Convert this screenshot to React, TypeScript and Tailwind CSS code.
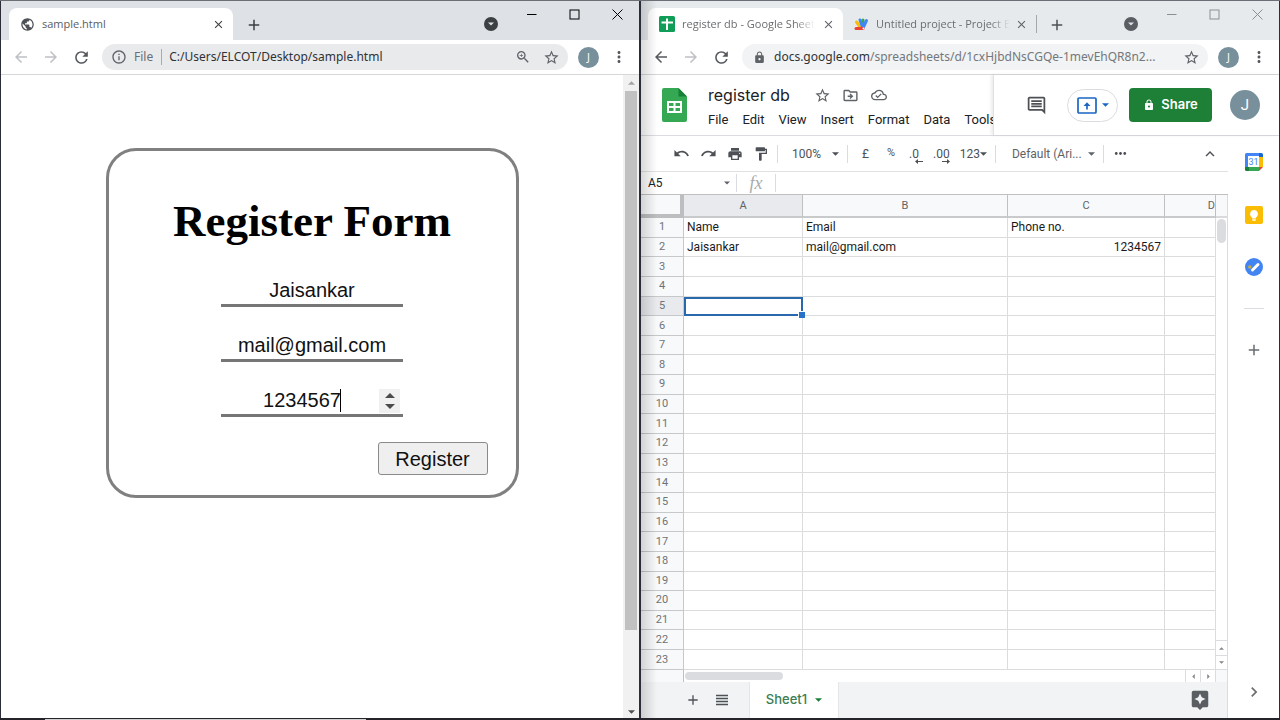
import React, { useState } from "react";
import {
  MdAdd,
  MdArrowBack,
  MdArrowForward,
  MdAssistant,
  MdChevronRight,
  MdClose,
  MdFormatPaint,
  MdInfoOutline,
  MdKeyboardArrowUp,
  MdLock,
  MdMoreHoriz,
  MdMoreVert,
  MdOutlineCloudDone,
  MdOutlineDriveFileMove,
  MdOutlineInsertComment,
  MdPrint,
  MdPublic,
  MdRedo,
  MdRefresh,
  MdStarBorder,
  MdUndo,
  MdViewHeadline,
  MdZoomIn,
} from "react-icons/md";

const CHROME_FONT = "font-['Open_Sans','Noto_Sans',sans-serif]";
const URL_FONT = "font-['Noto_Sans','Open_Sans',sans-serif]";

function SheetsFavicon() {
  return (
    <svg viewBox="0 0 16 16" className="size-4 shrink-0" aria-hidden="true">
      <rect width="16" height="16" rx="1.5" fill="#0f9d58" />
      <path d="M7 2.500h2v3h5v2H9v6.500H7v-6.500H2.500v-2H7z" fill="#fff" />
    </svg>
  );
}

function ScriptFavicon() {
  return (
    <svg viewBox="0 0 16 16" className="size-4 shrink-0" aria-hidden="true">
      <g strokeLinecap="round" strokeWidth="3">
        <path d="M3.500 6l4 5.500" stroke="#fbbc04" />
        <path d="M10 4l0 6" stroke="#34a853" />
        <path d="M7 4l2.500 7" stroke="#4285f4" />
        <path d="M13.500 4.500l-3.500 7.500" stroke="#4285f4" />
        <path d="M3 12.500h7" stroke="#ea4335" />
      </g>
      <circle cx="10.500" cy="12.500" r="1" fill="#fff" />
    </svg>
  );
}

function SheetsLogo() {
  return (
    <svg viewBox="0 0 25 34" className="h-[34px] w-[25px] shrink-0" aria-hidden="true">
      <path d="M2 0h14.500L25 8.500V32a2 2 0 0 1-2 2H2a2 2 0 0 1-2-2V2a2 2 0 0 1 2-2z" fill="#34a853" />
      <path d="M16.500 0L25 8.500h-8.500z" fill="#188038" />
      <path
        d="M5 13h15v12H5zM7 15v3h4.500v-3zM13.500 15v3H18v-3zM7 20v3h4.500v-3zM13.500 20v3H18v-3z"
        fill="#fff"
        fillRule="evenodd"
      />
    </svg>
  );
}

function CalendarIcon() {
  return (
    <svg viewBox="0 0 18 18" className="size-[18px]" aria-hidden="true">
      <path d="M1.500 0H14v3H3v11H0V1.500A1.500 1.500 0 0 1 1.500 0z" fill="#4285f4" />
      <path d="M14 0h2.500A1.500 1.500 0 0 1 18 1.500V4h-4z" fill="#1967d2" />
      <path d="M14 4h4v10h-4z" fill="#fbbc04" />
      <path d="M3 14h11v4H3z" fill="#34a853" />
      <path d="M0 14h4v4H1.500A1.500 1.500 0 0 1 0 16.500z" fill="#188038" />
      <path d="M14 14h4l-4 4z" fill="#ea4335" />
      <rect x="3" y="3" width="11" height="11" fill="#fff" />
      <text x="8.500" y="12" textAnchor="middle" fontSize="9" fill="#4285f4" fontFamily="Roboto, sans-serif">
        31
      </text>
    </svg>
  );
}

function KeepIcon() {
  return (
    <svg viewBox="0 0 18 18" className="size-[18px]" aria-hidden="true">
      <rect width="18" height="18" rx="2" fill="#fbbc04" />
      <path d="M9 4a4 4 0 0 0-2 7.400V12.500h4v-1.100A4 4 0 0 0 9 4zM7.300 13.300h3.400v1.500H7.300z" fill="#fff" />
    </svg>
  );
}

function TasksIcon() {
  return (
    <svg viewBox="0 0 18 18" className="size-[18px]" aria-hidden="true">
      <circle cx="9" cy="9" r="9" fill="#4384f3" />
      <circle cx="4.800" cy="9" r="1.800" fill="#c5a94f" />
      <path d="M7.500 12l5.500-5.500" stroke="#fff" strokeWidth="3" strokeLinecap="round" />
    </svg>
  );
}

function Triangle({ className }: { className: string }) {
  return (
    <svg viewBox="0 0 8 4" className={className} aria-hidden="true">
      <path d="M0 0h8L4 4z" fill="currentColor" />
    </svg>
  );
}

function WindowControls({ color, badge }: { color: string; badge: string }) {
  return (
    <div className="ml-auto flex shrink-0 items-start">
      <button aria-label="Search tabs" className={`mt-4 mr-3 flex size-[14px] items-center justify-center rounded-full text-[#dee1e6] ${badge}`}>
        <Triangle className="h-1 w-[6px]" />
      </button>
      <div className={`flex ${color}`}>
        <button aria-label="Minimize" className="flex h-[26px] w-[43px] items-center justify-center">
          <svg viewBox="0 0 11 11" className="size-[11px]">
            <path d="M1 5.500h9.500" stroke="currentColor" />
          </svg>
        </button>
        <button aria-label="Maximize" className="flex h-[26px] w-[43px] items-center justify-center">
          <svg viewBox="0 0 11 11" className="size-[11px]">
            <rect x="1" y="1" width="9" height="9" fill="none" stroke="currentColor" />
          </svg>
        </button>
        <button aria-label="Close window" className="flex h-[26px] w-[43px] items-center justify-center">
          <svg viewBox="0 0 11 11" className="size-[11px]">
            <path d="M.5.5l10 10M10.500.5l-10 10" stroke="currentColor" />
          </svg>
        </button>
      </div>
    </div>
  );
}

function NavButtons({ backClass }: { backClass: string }) {
  return (
    <>
      <button aria-label="Back" className={`flex w-[30px] justify-center ${backClass}`}>
        <MdArrowBack size={18} />
      </button>
      <button aria-label="Forward" className="flex w-[30px] justify-center text-[#bdc0c4]">
        <MdArrowForward size={18} />
      </button>
      <button aria-label="Reload" className="flex w-[30px] justify-center text-[#55595e]">
        <MdRefresh size={19} />
      </button>
    </>
  );
}

function ProfileAndMenu() {
  return (
    <>
      <button aria-label="Profile" className="ml-[10px] flex size-[21px] shrink-0 items-center justify-center rounded-full bg-[#78909c] text-[11px] text-white">
        J
      </button>
      <button aria-label="Browser menu" className="ml-[11px] shrink-0 text-[#55595e]">
        <MdMoreVert size={18} />
      </button>
    </>
  );
}

function ScrollArrow({ className }: { className: string }) {
  return <Triangle className={`h-1 w-[7px] ${className}`} />;
}

function FormWindow() {
  const [name, setName] = useState("Jaisankar");
  const [email, setEmail] = useState("mail@gmail.com");
  const [phone, setPhone] = useState("1234567");
  const field =
    "h-[31px] w-full border-b-[3px] border-[#767676] bg-transparent text-center text-[20px] leading-6 text-[#111] outline-none";

  return (
    <section className="flex min-w-0 flex-col border-x border-[#2b2d38] bg-white">
      <header className={`shrink-0 text-[12px] ${CHROME_FONT}`}>
        <div className="flex h-[39px] bg-[#dee1e6] pl-2">
          <div className="mt-[7px] flex w-[224px] items-center rounded-t-lg bg-white pr-2 pl-[11px] text-[11px] text-[#5a5d61]">
            <MdPublic size={15} className="text-[#4d5156]" />
            <span className="ml-[7px]">sample.html</span>
            <button aria-label="Close tab" className="ml-auto text-[#3c4043]">
              <MdClose size={13} />
            </button>
          </div>
          <button aria-label="New tab" className="mt-2 ml-3 flex items-center text-[#3c4043]">
            <MdAdd size={18} />
          </button>
          <WindowControls color="text-black" badge="bg-[#3c4043]" />
        </div>
        <div className="flex h-[35px] items-center border-b border-[#d5d7da] pr-[11px] pl-[5px]">
          <NavButtons backClass="text-[#bdc0c4]" />
          <div className={`ml-[6px] flex h-[26px] flex-1 items-center rounded-full bg-[#e9eaec] pr-2 pl-[9px] ${URL_FONT}`}>
            <MdInfoOutline size={16} className="text-[#5f6368]" />
            <span className="ml-[7px] border-r border-[#a8abaf] pr-2 leading-4 text-[#6b6e72]">File</span>
            <span className="ml-[7px] flex-1 truncate text-[#303236]">C:/Users/ELCOT/Desktop/sample.html</span>
            <button aria-label="Zoom" className="text-[#5f6368]">
              <MdZoomIn size={16} />
            </button>
            <button aria-label="Bookmark" className="ml-3 text-[#5f6368]">
              <MdStarBorder size={17} />
            </button>
          </div>
          <ProfileAndMenu />
        </div>
      </header>
      <div className="flex min-h-0 flex-1">
        <main className="flex flex-1 items-start justify-center pt-[73px]">
          <form
            onSubmit={(e) => e.preventDefault()}
            className="flex h-[350px] w-[413px] flex-col items-center rounded-[30px] border-[3px] border-[#808080] font-['Liberation_Sans',Arial,sans-serif]"
          >
            <h1 className="mt-11 font-['Liberation_Serif','Times_New_Roman',serif] text-[45px] leading-[52px] font-bold text-black">
              Register Form
            </h1>
            <div className="mt-[29px] flex w-[182px] flex-col gap-6">
              <input aria-label="Name" className={field} value={name} onChange={(e) => setName(e.target.value)} />
              <input aria-label="Email" className={field} value={email} onChange={(e) => setEmail(e.target.value)} />
              <div className="relative">
                <input
                  aria-label="Phone number"
                  type="number"
                  className={`${field} pr-5 [&::-webkit-inner-spin-button]:appearance-none`}
                  value={phone}
                  onChange={(e) => setPhone(e.target.value)}
                />
                <span className="absolute top-[3px] left-[119px] h-[23px] w-px bg-black" aria-hidden="true" />
                <div className="absolute top-[3px] right-[3px] flex h-6 w-[21px] flex-col items-center justify-center gap-[6px] bg-[#f0f0f0] text-[#4a4a4a]">
                  <button type="button" aria-label="Increase" onClick={() => setPhone(String(Number(phone) + 1))}>
                    <Triangle className="h-[5px] w-[10px] rotate-180" />
                  </button>
                  <button type="button" aria-label="Decrease" onClick={() => setPhone(String(Number(phone) - 1))}>
                    <Triangle className="h-[5px] w-[10px]" />
                  </button>
                </div>
              </div>
            </div>
            <button
              type="submit"
              className="mt-[25px] mr-7 h-[33px] w-[110px] self-end rounded-[3px] border border-[#8a8a8a] bg-[#efefef] text-[20px] leading-6 text-[#111]"
            >
              Register
            </button>
          </form>
        </main>
        <div className="flex w-4 flex-col items-center bg-[#f1f1f1] pt-[6px] pb-1">
          <ScrollArrow className="rotate-180 text-[#a3a3a3]" />
          <div className="mt-[6px] min-h-0 w-3 basis-[539px] bg-[#c1c1c1]" />
          <ScrollArrow className="mt-auto text-[#505050]" />
        </div>
      </div>
    </section>
  );
}

type Row = { name?: string; email?: string; phone?: string };
const rows: Row[] = [
  { name: "Name", email: "Email", phone: "Phone no." },
  { name: "Jaisankar", email: "mail@gmail.com", phone: "1234567" },
  ...Array.from({ length: 21 }, () => ({})),
];
const SELECTED_ROW = 5;

function Grid() {
  const head = "border-r border-b-[2px] border-r-[#c0c0c0] border-b-[#c8cacc] p-0 font-normal";
  const cell = "truncate border-r border-b border-[#dadcdd] p-0 px-[3px]";
  return (
    <table className="h-full w-full table-fixed border-separate border-spacing-0 text-[12px] leading-4 text-[#1a1a1a]">
      <colgroup>
        <col className="w-[43px]" />
        <col className="w-[119px]" />
        <col className="w-[205px]" />
        <col className="w-[157px]" />
        <col />
      </colgroup>
      <thead className="text-[11px] text-[#5f6368]">
        <tr className="h-[23px]">
          <th aria-label="Select all" className="border-r-4 border-b-4 border-[#bcbec0] bg-[#f8f9fa] p-0" />
          <th className={`${head} bg-[#e8eaed]`}>A</th>
          <th className={`${head} bg-[#f8f9fa]`}>B</th>
          <th className={`${head} bg-[#f8f9fa]`}>C</th>
          <th className={`${head} bg-[#f8f9fa] text-right`}>D</th>
        </tr>
      </thead>
      <tbody>
        {rows.map((row, i) => {
          const n = i + 1;
          const selected = n === SELECTED_ROW;
          return (
            <tr key={n}>
              <th
                scope="row"
                className={`border-r border-b border-[#c6c8ca] p-0 text-[11px] leading-4 font-normal text-[#6f7377] ${
                  selected ? "bg-[#e8eaed]" : "bg-[#f8f9fa]"
                }`}
              >
                {n}
              </th>
              {selected ? (
                <td className="relative border-2 border-[#2a68ae] p-0">
                  <span className="absolute -right-1 -bottom-1 size-[7px] border-t border-l border-white bg-[#2a72c8]" />
                </td>
              ) : (
                <td className={cell}>{row.name}</td>
              )}
              <td className={cell}>{row.email}</td>
              <td className={`${cell} ${n === 2 ? "text-right" : ""}`}>{row.phone}</td>
              <td className={cell} />
            </tr>
          );
        })}
      </tbody>
    </table>
  );
}

function Divider() {
  return <span className="h-[18px] w-px bg-[#dadce0]" />;
}

function SheetsToolbar() {
  return (
    <div className="flex h-9 shrink-0 items-center border-b border-[#dfe1e3] pr-[9px] pl-[32px] text-[12px] text-[#4d5156]">
      <div className="flex items-center gap-[10px]">
        <button aria-label="Undo"><MdUndo size={17} /></button>
        <button aria-label="Redo"><MdRedo size={17} /></button>
        <button aria-label="Print"><MdPrint size={16} /></button>
        <button aria-label="Paint format"><MdFormatPaint size={16} /></button>
      </div>
      <span className="w-2" />
      <Divider />
      <button className="ml-[14px] flex items-center gap-[11px]">
        100% <Triangle className="h-1 w-[7px]" />
      </button>
      <span className="w-2" />
      <Divider />
      <button className="ml-[14px]" aria-label="Format as currency">£</button>
      <button className="ml-[18px] text-[11px]" aria-label="Format as percent">%</button>
      <button className="relative ml-[14px]" aria-label="Decrease decimal places">
        .0
        <svg viewBox="0 0 8 5" className="absolute -right-1 -bottom-px h-[5px] w-2">
          <path d="M0 2.500L3 0v2h5v1H3v2z" fill="currentColor" />
        </svg>
      </button>
      <button className="relative ml-[14px]" aria-label="Increase decimal places">
        .00
        <svg viewBox="0 0 8 5" className="absolute right-0 -bottom-px h-[5px] w-2">
          <path d="M8 2.500L5 0v2H0v1h5v2z" fill="currentColor" />
        </svg>
      </button>
      <button className="ml-[10px] flex items-center">
        123 <Triangle className="h-1 w-[7px]" />
      </button>
      <span className="w-2" />
      <Divider />
      <button className="ml-[16px] flex items-center gap-[6px] text-[#5f6368]">
        Default (Ari... <Triangle className="h-1 w-[7px]" />
      </button>
      <span className="w-2" />
      <Divider />
      <button className="ml-2" aria-label="More"><MdMoreHoriz size={17} /></button>
      <button className="ml-auto" aria-label="Hide menus"><MdKeyboardArrowUp size={18} /></button>
    </div>
  );
}

const menus = ["File", "Edit", "View", "Insert", "Format", "Data", "Tools"];

function SheetsWindow() {
  return (
    <section className="relative flex min-w-0 flex-col border-x border-[#2b2d38] bg-white">
      <div className="pointer-events-none absolute inset-y-0 left-0 z-10 w-4 bg-linear-to-r from-black/15 to-transparent" />
      <header className={`shrink-0 text-[12px] ${CHROME_FONT}`}>
        <div className="flex h-[39px] bg-[#e7eaed] pl-[7px]">
          <div className="mt-[7px] flex w-[195px] shrink-0 items-center rounded-t-lg bg-white pr-2 pl-[11px] text-[11px] text-[#6a6d71]">
            <SheetsFavicon />
            <span className="ml-[7px] mask-r-from-85% whitespace-nowrap">register db - Google Sheet</span>
            <button aria-label="Close tab" className="ml-auto text-[#5f6368]">
              <MdClose size={13} />
            </button>
          </div>
          <div className="mt-[7px] flex w-[193px] shrink-0 items-center pr-[8px] pl-[10px] text-[11px] text-[#6a6d71]">
            <ScriptFavicon />
            <span className="ml-[7px] mask-r-from-85% whitespace-nowrap">Untitled project - Project E</span>
            <button aria-label="Close tab" className="ml-auto text-[#5f6368]">
              <MdClose size={13} />
            </button>
          </div>
          <span className="mt-[14px] h-[18px] w-px bg-[#a4a8ac]" />
          <button aria-label="New tab" className="mt-2 ml-[11px] flex items-center text-[#4d5156]">
            <MdAdd size={18} />
          </button>
          <WindowControls color="text-[#8c8f92]" badge="bg-[#5a5d61]" />
        </div>
        <div className="flex h-[35px] items-center border-b border-[#d5d7da] pr-[11px] pl-[5px]">
          <NavButtons backClass="text-[#55595e]" />
          <div className={`ml-[6px] flex h-[26px] min-w-0 flex-1 items-center rounded-full bg-[#f1f3f4] pr-2 pl-[11px] ${URL_FONT}`}>
            <MdLock size={13} className="shrink-0 text-[#5f6368]" />
            <span className="ml-2 min-w-0 flex-1 whitespace-nowrap text-[#74777b]">
              <span className="text-[#303236]">docs.google.com</span>/spreadsheets/d/1cxHjbdNsCGQe-1mevEhQR8n2...
            </span>
            <button aria-label="Bookmark" className="text-[#5f6368]">
              <MdStarBorder size={17} />
            </button>
          </div>
          <ProfileAndMenu />
        </div>
      </header>

      <div className="flex min-h-0 flex-1 flex-col font-[Roboto,sans-serif]">
        <div className="flex h-[61px] shrink-0 border-b border-[#dadce0]">
          <div className="flex min-w-0 flex-1 overflow-hidden pt-[13px] pl-[21px]">
            <SheetsLogo />
            <div className="-mt-[3px] ml-[21px]">
              <div className="flex items-center text-[#5f6368]">
                <span className="font-['Inter',sans-serif] text-[16px] leading-5 text-[#202124]">register db</span>
                <button className="ml-6" aria-label="Star"><MdStarBorder size={17} /></button>
                <button className="ml-[11px]" aria-label="Move"><MdOutlineDriveFileMove size={17} /></button>
                <button className="ml-3" aria-label="Saved to Drive"><MdOutlineCloudDone size={16} /></button>
              </div>
              <nav className="mt-[5px] flex gap-[14px] text-[13px] leading-5 text-[#202124]">
                {menus.map((m) => (
                  <button key={m}>{m}</button>
                ))}
              </nav>
            </div>
          </div>
          <div className="flex shrink-0 items-center border-l border-[#e0e1e3] pr-[19px] pl-8 shadow-[-2px_0_3px_rgba(0,0,0,0.08)]">
            <button aria-label="Comments" className="text-[#4d5156]"><MdOutlineInsertComment size={21} /></button>
            <button aria-label="Present" className="ml-5 flex h-[33px] w-[51px] items-center justify-center gap-[5px] rounded-full border border-[#dadce0] text-[#1a66c4]">
              <svg viewBox="0 0 20 17" className="h-[17px] w-5" fill="none" stroke="currentColor" strokeWidth="1.700">
                <rect x="1" y="1" width="18" height="15" rx="1" />
                <path d="M10 12.500V7" />
                <path d="M6.500 9L10 5.200 13.500 9z" fill="currentColor" stroke="none" />
              </svg>
              <Triangle className="h-1 w-[7px]" />
            </button>
            <button className="ml-[11px] flex h-[34px] w-[83px] items-center justify-center gap-[6px] rounded bg-[#1e8037] font-['Inter',sans-serif] text-[13px] font-semibold text-white">
              <MdLock size={12} /> Share
            </button>
            <button aria-label="Account" className="ml-[18px] flex size-[30px] items-center justify-center rounded-full bg-[#78909c] text-[15px] text-white">
              J
            </button>
          </div>
        </div>

        <div className="flex min-h-0 flex-1">
          <div className="flex min-w-0 flex-1 flex-col">
            <SheetsToolbar />
            <div className="flex h-[23px] shrink-0 items-center border-b border-[#c0c0c0] text-[12px] text-[#202124]">
              <button className="flex w-[95px] items-center justify-between pr-[6px] pl-[7px]">
                A5 <Triangle className="h-1 w-[6px] text-[#5f6368]" />
              </button>
              <Divider />
              <span className="w-[38px] text-center font-['Liberation_Serif',serif] text-[18px] leading-5 text-[#a8abae] italic">fx</span>
              <Divider />
              <input aria-label="Formula" className="h-5 min-w-0 flex-1 px-2 outline-none" />
            </div>
            <div className="flex min-h-0 flex-1">
              <div className="min-w-0 flex-1">
                <Grid />
              </div>
              <div className="flex w-3 shrink-0 flex-col border-r border-[#dadce0]">
                <div className="h-[23px] border-b-2 border-[#d8dadc] bg-[#f8f9fa]" />
                <div className="mt-px ml-px h-6 w-[9px] rounded-full bg-[#dadce0]" />
                <div className="mt-auto flex h-[15px] items-center justify-center border-t border-[#dadce0] text-[#80868b]">
                  <Triangle className="h-[3px] w-[5px] rotate-180" />
                </div>
                <div className="flex h-[15px] items-center justify-center border-y border-[#dadce0] text-[#80868b]">
                  <Triangle className="h-[3px] w-[5px]" />
                </div>
              </div>
            </div>
            <div className="flex h-3 shrink-0 border-r border-[#dadce0]">
              <div className="w-[43px] border-r border-[#c0c0c0] bg-[#f8f9fa]" />
              <div className="mt-[2px] ml-px h-2 w-[98px] rounded-full bg-[#dadce0]" />
              <div className="ml-auto flex w-[15px] items-center justify-center border-l border-[#dadce0] text-[#80868b]">
                <Triangle className="h-[3px] w-[5px] rotate-90" />
              </div>
              <div className="flex w-4 items-center justify-center border-x border-[#dadce0] text-[#80868b]">
                <Triangle className="h-[3px] w-[5px] -rotate-90" />
              </div>
              <div className="w-[11px] bg-[#f8f9fa]" />
            </div>
            <footer className="flex h-9 shrink-0 items-center border-r border-[#dadce0] bg-[#f1f3f4] pr-4 pl-[44px] text-[#4d5156]">
              <button aria-label="Add sheet"><MdAdd size={16} /></button>
              <button aria-label="All sheets" className="ml-3"><MdViewHeadline size={18} /></button>
              <button className="ml-[18px] flex h-full w-[90px] items-center justify-center gap-2 border-x border-[#e4e6e8] bg-white font-['Inter',sans-serif] text-[13px] font-medium text-[#3c7d51]">
                Sheet1 <Triangle className="h-1 w-[7px] text-[#188038]" />
              </button>
              <button aria-label="Explore" className="ml-auto text-[#5a5d61]"><MdAssistant size={22} /></button>
            </footer>
          </div>
          <aside className="flex w-[51px] shrink-0 flex-col items-center pt-[17px] pb-4 text-[#6a6d70]">
            <button aria-label="Calendar"><CalendarIcon /></button>
            <button aria-label="Keep" className="mt-[35px]"><KeepIcon /></button>
            <button aria-label="Tasks" className="mt-[34px]"><TasksIcon /></button>
            <hr className="mt-8 w-5 border-[#dadce0]" />
            <button aria-label="Get add-ons" className="mt-[32px]"><MdAdd size={18} /></button>
            <button aria-label="Hide side panel" className="mt-auto"><MdChevronRight size={20} /></button>
          </aside>
        </div>
      </div>
    </section>
  );
}

export default function App() {
  return (
    <div className="flex h-screen flex-col border-t border-[#6e6e76] bg-white [&_svg]:block">
      <div className="grid min-h-0 flex-1 grid-cols-2">
        <FormWindow />
        <SheetsWindow />
      </div>
      <div className="flex h-[2px] shrink-0 items-end bg-[#24242a] pl-[45px]">
        <span className="h-px w-[26%] bg-[#d0d0d0]" />
      </div>
    </div>
  );
}
